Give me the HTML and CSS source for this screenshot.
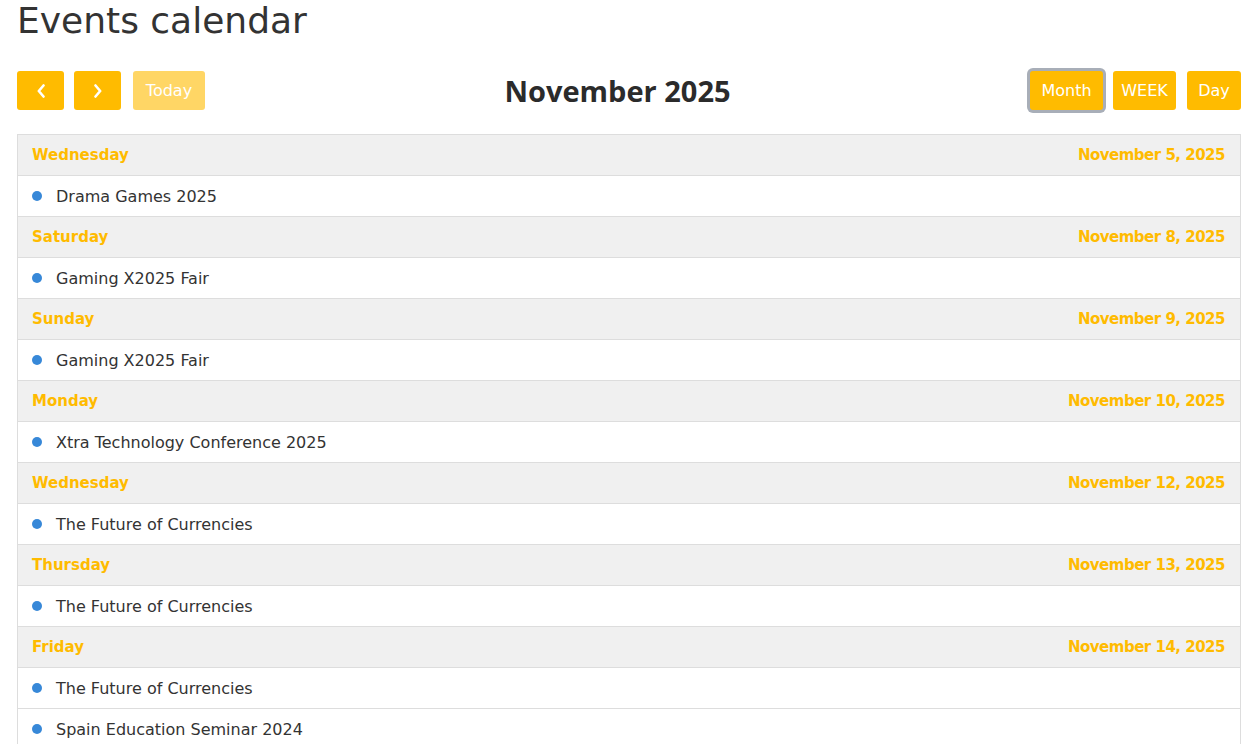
FILE: index.html
```html
<!DOCTYPE html>
<html lang="en">
  <head>
    <meta charset="UTF-8" />
    <meta name="viewport" content="width=device-width, initial-scale=1" />
    <title>Events calendar</title>
    <link rel="stylesheet" href="styles.css">
  </head>
  <body>
    <h1 class="page-title">Events calendar</h1>

    <div class="toolbar">
      <div class="toolbar-group">
        <button class="btn btn-icon" aria-label="prev">
          <svg width="10" height="14" viewBox="0 0 10 14"><path d="M7.5 1.5 2.8 7l4.7 5.5" fill="none" stroke="#fff" stroke-width="2.6" stroke-linecap="round" stroke-linejoin="round"/></svg>
        </button>
        <button class="btn btn-icon" aria-label="next">
          <svg width="10" height="14" viewBox="0 0 10 14"><path d="M2.5 1.5 7.2 7l-4.7 5.5" fill="none" stroke="#fff" stroke-width="2.6" stroke-linecap="round" stroke-linejoin="round"/></svg>
        </button>
        <button class="btn btn-today" disabled>Today</button>
      </div>
      <h2 class="toolbar-title">November 2025</h2>
      <div class="toolbar-group views">
        <button class="btn btn-month active">Month</button>
        <button class="btn btn-week">WEEK</button>
        <button class="btn btn-day">Day</button>
      </div>
    </div>

    <div class="list">
      <div class="day-row"><span>Wednesday</span><span class="date">November 5, 2025</span></div>
      <div class="event-row"><i class="dot"></i>Drama Games 2025</div>

      <div class="day-row"><span>Saturday</span><span class="date">November 8, 2025</span></div>
      <div class="event-row"><i class="dot"></i>Gaming X2025 Fair</div>

      <div class="day-row"><span>Sunday</span><span class="date">November 9, 2025</span></div>
      <div class="event-row"><i class="dot"></i>Gaming X2025 Fair</div>

      <div class="day-row"><span>Monday</span><span class="date">November 10, 2025</span></div>
      <div class="event-row"><i class="dot"></i>Xtra Technology Conference 2025</div>

      <div class="day-row"><span>Wednesday</span><span class="date">November 12, 2025</span></div>
      <div class="event-row"><i class="dot"></i>The Future of Currencies</div>

      <div class="day-row"><span>Thursday</span><span class="date">November 13, 2025</span></div>
      <div class="event-row"><i class="dot"></i>The Future of Currencies</div>

      <div class="day-row"><span>Friday</span><span class="date">November 14, 2025</span></div>
      <div class="event-row"><i class="dot"></i>The Future of Currencies</div>
      <div class="event-row"><i class="dot"></i>Spain Education Seminar 2024</div>
    </div>
  </body>
</html>
```

FILE: styles.css
```css
body {
  font-family: "DejaVu Sans", Arial, sans-serif;
  color: #333;
  background: #fff;
  margin: 0;
  padding: 0 1px 0 17px;
}
.page-title {
  font-size: 36px;
  font-weight: 400;
  line-height: 42px;
  margin: 0;
  color: #333;
}
.toolbar {
  display: flex;
  align-items: center;
  justify-content: space-between;
  margin-top: 29px;
  margin-bottom: 24px;
}
.toolbar-group {
  display: flex;
  gap: 10px;
}
.toolbar-title {
  margin: 0;
  font-family: "Open Sans", Arial, sans-serif;
  font-size: 29px;
  line-height: 39px;
  font-weight: 700;
  color: #2b2b2b;
}
.btn {
  font-family: inherit;
  font-size: 16px;
  color: #fff;
  background: #ffbb00;
  border: 0;
  border-radius: 3px;
  height: 39px;
  padding: 0;
  display: flex;
  align-items: center;
  justify-content: center;
}
.btn-icon {
  width: 47px;
}
.btn-today {
  width: 72px;
  margin-left: 2px;
  opacity: 0.6;
}
.btn-month {
  width: 73px;
}
.btn-week {
  width: 63px;
}
.btn-day {
  width: 54px;
  margin-left: 1px;
}
.btn.active {
  box-shadow: 0 0 0 3px #a8aeb8;
}
.list {
  border: 1px solid #ddd;
  border-top: 0;
}
.day-row,
.event-row {
  border-top: 1px solid #ddd;
  height: 40px;
  display: flex;
  align-items: center;
  padding: 0 15px 0 14px;
}
.day-row {
  background: #f0f0f0;
  color: #ffbb00;
  font-size: 15px;
  font-weight: 700;
  justify-content: space-between;
}
.day-row .date {
  letter-spacing: -0.5px;
}
.event-row {
  font-size: 16px;
}
.dot {
  width: 10px;
  height: 10px;
  border-radius: 50%;
  background: #3788d8;
  margin-right: 14px;
}
```
